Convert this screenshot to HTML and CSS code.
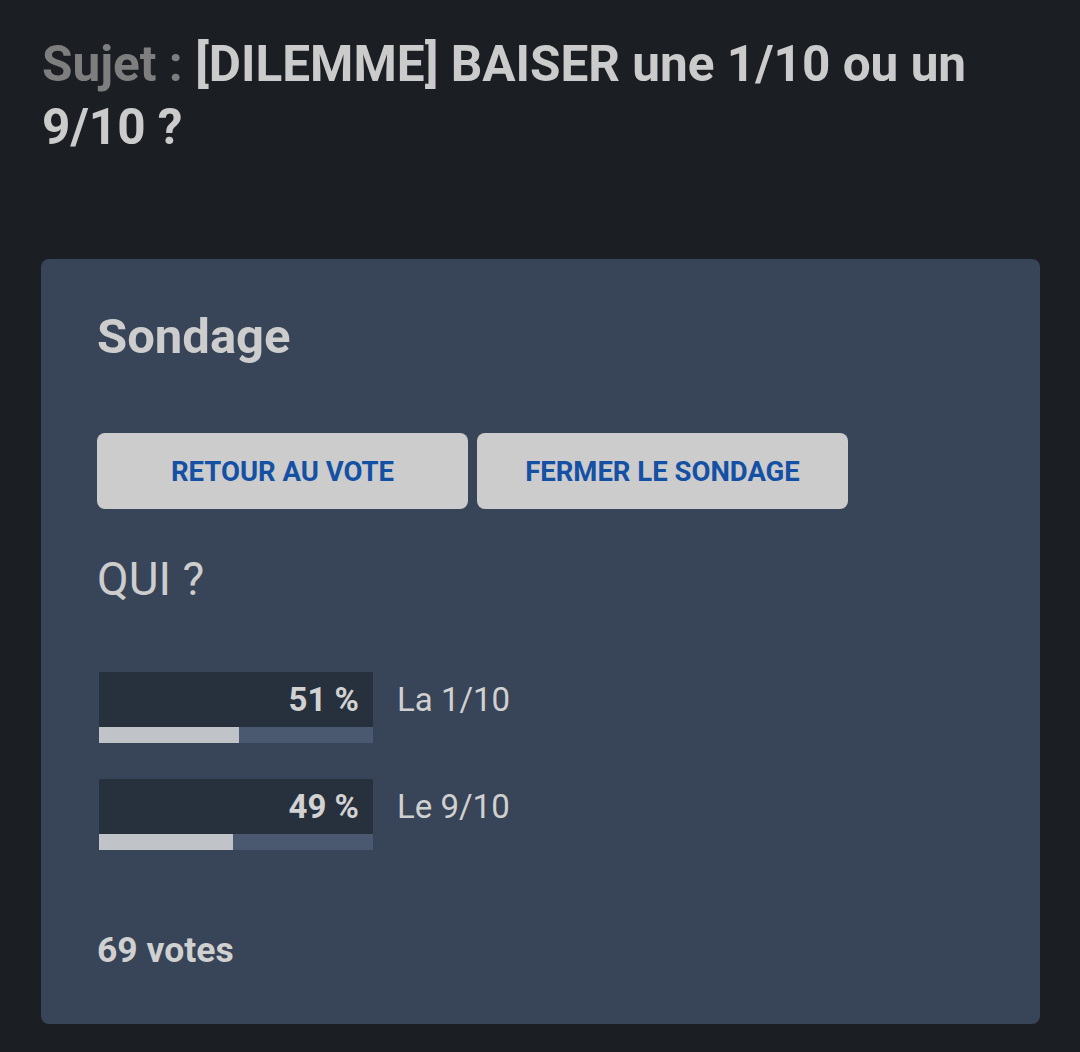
FILE: index.html
```html
<!DOCTYPE html>
<html lang="fr">
<head>
    <meta charset="UTF-8">
    <title>Sondage</title>
    <link rel="stylesheet" href="styles.css">
</head>
<body>
    <h1 class="topic-title"><span class="topic-label">Sujet :</span> <span>[DILEMME] BAISER une 1/10 ou un 9/10 ?</span></h1>

    <div class="poll-card">
        <h2 class="poll-heading">Sondage</h2>

        <div class="poll-actions">
            <button class="poll-btn">Retour au vote</button>
            <button class="poll-btn">Fermer le sondage</button>
        </div>

        <div class="poll-question">QUI ?</div>

        <ul class="poll-results">
            <li class="result-row">
                <div class="result-bar">
                    <div class="result-pct">51 %</div>
                    <div class="result-track"><div class="result-fill" style="width: 51%"></div></div>
                </div>
                <span class="result-label">La 1/10</span>
            </li>
            <li class="result-row">
                <div class="result-bar">
                    <div class="result-pct">49 %</div>
                    <div class="result-track"><div class="result-fill" style="width: 49%"></div></div>
                </div>
                <span class="result-label">Le 9/10</span>
            </li>
        </ul>

        <div class="poll-total">69 votes</div>
    </div>
</body>
</html>
```

FILE: styles.css
```css
body {
    margin: 0;
    padding: 33px 40px 0 41px;
    background-color: #1b1e23;
    font-family: Roboto, "Liberation Sans", sans-serif;
    color: #cdcdcd;
}
.topic-title {
    margin: 0 0 100px 1px;
    font-size: 49.5px;
    line-height: 63px;
    font-weight: bold;
    color: #cbcbcb;
}
.topic-label {
    color: #7e7e7e;
}
.poll-card {
    background-color: #384457;
    border-radius: 8px;
    padding: 49px 56px 53px 56px;
}
.poll-heading {
    margin: 0 0 67px 0;
    font-size: 49px;
    line-height: 58px;
    font-weight: bold;
    color: #cdcdcd;
}
.poll-actions {
    display: flex;
    gap: 9px;
    margin-bottom: 43px;
}
.poll-btn {
    width: 371px;
    height: 76px;
    border: none;
    border-radius: 8px;
    background-color: #cccccc;
    color: #1450a3;
    font-family: Roboto, "Liberation Sans", sans-serif;
    font-size: 27.5px;
    font-weight: bold;
    text-transform: uppercase;
    padding: 0;
}
.poll-question {
    font-size: 46px;
    line-height: 54px;
    color: #cdcdcd;
    margin-bottom: 66px;
}
.poll-results {
    list-style: none;
    margin: 0;
    padding: 0 0 0 2px;
}
.result-row {
    display: flex;
    gap: 24px;
    margin-bottom: 36px;
}
.result-row:last-child {
    margin-bottom: 0;
}
.result-bar {
    width: 274px;
}
.result-pct {
    height: 55px;
    background-color: #27303d;
    display: flex;
    align-items: center;
    justify-content: flex-end;
    padding-right: 14px;
    box-sizing: border-box;
    font-size: 33px;
    font-weight: bold;
    color: #d2d2d2;
}
.result-track {
    height: 16px;
    background-color: #4a5870;
}
.result-fill {
    height: 100%;
    background-color: #c0c3c8;
}
.result-label {
    line-height: 55px;
    font-size: 33px;
    color: #d0d0d0;
}
.poll-total {
    margin-top: 79px;
    font-size: 35.5px;
    line-height: 42px;
    font-weight: bold;
    color: #d0d0d0;
}
```
